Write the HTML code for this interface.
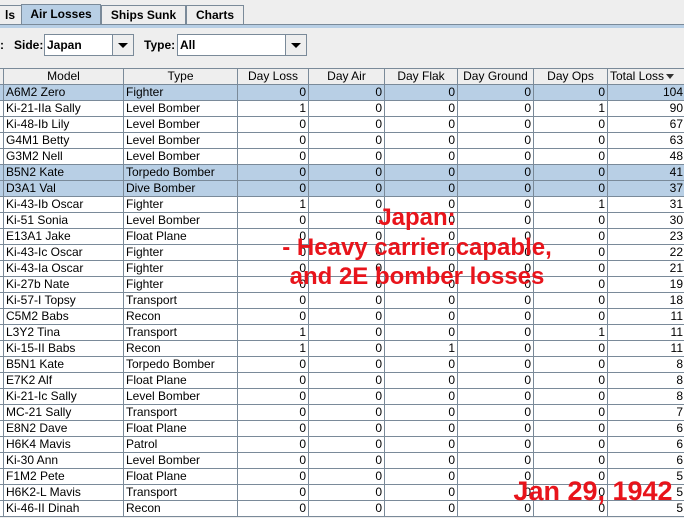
<!DOCTYPE html>
<html><head><style>
body{margin:0;width:684px;height:518px;overflow:hidden;background:#eeeeee;font-family:"Liberation Sans",Arial,sans-serif;font-size:12px;position:relative}
.tab{position:absolute;top:5px;height:19px;border:1px solid #7a8a99;border-bottom:none;background:#eeeeee;font-weight:bold;font-size:12px;line-height:19px;text-align:center;box-sizing:border-box}
.tab.sel{background:#b8cfe5;top:4px;height:21px}
.line{position:absolute;top:24px;left:0;width:684px;height:3px;background:#b8cfe5;border-top:1px solid #7a8a99}
.lbl{position:absolute;top:38px;font-weight:bold}
.combo{position:absolute;top:34px;height:22px;border:1px solid #7a8a99;background:#fff;box-sizing:border-box;font-weight:bold;line-height:20px;padding-left:2px}
.combo .btn{position:absolute;right:0;top:0;width:20px;height:20px;border-left:1px solid #7a8a99;background:#eee}
.combo .btn:after{content:"";position:absolute;left:5px;top:8px;border-left:5px solid transparent;border-right:5px solid transparent;border-top:5px solid #000}
table{position:absolute;left:-1px;top:68px;border-collapse:collapse;table-layout:fixed;width:686px}
td,th{border:1px solid #7a8a99;height:15px;padding:0 2px;white-space:nowrap;overflow:hidden;font-weight:normal;line-height:15px}
th{background:#eeeeee;text-align:center}
td{background:#fff}
td.n{text-align:right}
tr.s td{background:#b8cfe5}
.tri{display:inline-block;width:0;height:0;border-left:4px solid transparent;border-right:4px solid transparent;border-top:5px solid #333;vertical-align:middle;margin-left:2px}
.red{position:absolute;color:#e8141b;font-weight:bold;font-size:24px;text-align:center;line-height:29.5px;white-space:nowrap}
</style></head><body>
<div class="tab" style="left:-2px;width:24px">ls</div>
<div class="tab sel" style="left:21px;width:80px">Air Losses</div>
<div class="tab" style="left:101px;width:85px">Ships Sunk</div>
<div class="tab" style="left:186px;width:58px">Charts</div>
<div class="line"></div>
<div class="lbl" style="left:0">:</div>
<div class="lbl" style="left:14px">Side:</div>
<div class="combo" style="left:44px;width:90px">Japan<div class="btn"></div></div>
<div class="lbl" style="left:144px">Type:</div>
<div class="combo" style="left:177px;width:130px">All<div class="btn"></div></div>
<table>
<colgroup><col style="width:4px"><col style="width:120px"><col style="width:114px"><col style="width:71px"><col style="width:76px"><col style="width:73px"><col style="width:76px"><col style="width:74px"><col style="width:78px"></colgroup>
<tr><th></th><th>Model</th><th>Type</th><th>Day Loss</th><th>Day Air</th><th>Day Flak</th><th>Day Ground</th><th>Day Ops</th><th style="text-align:left">Total Loss<span class="tri"></span></th></tr>
<tr class="s"><td></td><td>A6M2 Zero</td><td>Fighter</td><td class="n">0</td><td class="n">0</td><td class="n">0</td><td class="n">0</td><td class="n">0</td><td class="n">104</td></tr>
<tr><td></td><td>Ki-21-IIa Sally</td><td>Level Bomber</td><td class="n">1</td><td class="n">0</td><td class="n">0</td><td class="n">0</td><td class="n">1</td><td class="n">90</td></tr>
<tr><td></td><td>Ki-48-Ib Lily</td><td>Level Bomber</td><td class="n">0</td><td class="n">0</td><td class="n">0</td><td class="n">0</td><td class="n">0</td><td class="n">67</td></tr>
<tr><td></td><td>G4M1 Betty</td><td>Level Bomber</td><td class="n">0</td><td class="n">0</td><td class="n">0</td><td class="n">0</td><td class="n">0</td><td class="n">63</td></tr>
<tr><td></td><td>G3M2 Nell</td><td>Level Bomber</td><td class="n">0</td><td class="n">0</td><td class="n">0</td><td class="n">0</td><td class="n">0</td><td class="n">48</td></tr>
<tr class="s"><td></td><td>B5N2 Kate</td><td>Torpedo Bomber</td><td class="n">0</td><td class="n">0</td><td class="n">0</td><td class="n">0</td><td class="n">0</td><td class="n">41</td></tr>
<tr class="s"><td></td><td>D3A1 Val</td><td>Dive Bomber</td><td class="n">0</td><td class="n">0</td><td class="n">0</td><td class="n">0</td><td class="n">0</td><td class="n">37</td></tr>
<tr><td></td><td>Ki-43-Ib Oscar</td><td>Fighter</td><td class="n">1</td><td class="n">0</td><td class="n">0</td><td class="n">0</td><td class="n">1</td><td class="n">31</td></tr>
<tr><td></td><td>Ki-51 Sonia</td><td>Level Bomber</td><td class="n">0</td><td class="n">0</td><td class="n">0</td><td class="n">0</td><td class="n">0</td><td class="n">30</td></tr>
<tr><td></td><td>E13A1 Jake</td><td>Float Plane</td><td class="n">0</td><td class="n">0</td><td class="n">0</td><td class="n">0</td><td class="n">0</td><td class="n">23</td></tr>
<tr><td></td><td>Ki-43-Ic Oscar</td><td>Fighter</td><td class="n">0</td><td class="n">0</td><td class="n">0</td><td class="n">0</td><td class="n">0</td><td class="n">22</td></tr>
<tr><td></td><td>Ki-43-Ia Oscar</td><td>Fighter</td><td class="n">0</td><td class="n">0</td><td class="n">0</td><td class="n">0</td><td class="n">0</td><td class="n">21</td></tr>
<tr><td></td><td>Ki-27b Nate</td><td>Fighter</td><td class="n">0</td><td class="n">0</td><td class="n">0</td><td class="n">0</td><td class="n">0</td><td class="n">19</td></tr>
<tr><td></td><td>Ki-57-I Topsy</td><td>Transport</td><td class="n">0</td><td class="n">0</td><td class="n">0</td><td class="n">0</td><td class="n">0</td><td class="n">18</td></tr>
<tr><td></td><td>C5M2 Babs</td><td>Recon</td><td class="n">0</td><td class="n">0</td><td class="n">0</td><td class="n">0</td><td class="n">0</td><td class="n">11</td></tr>
<tr><td></td><td>L3Y2 Tina</td><td>Transport</td><td class="n">1</td><td class="n">0</td><td class="n">0</td><td class="n">0</td><td class="n">1</td><td class="n">11</td></tr>
<tr><td></td><td>Ki-15-II Babs</td><td>Recon</td><td class="n">1</td><td class="n">0</td><td class="n">1</td><td class="n">0</td><td class="n">0</td><td class="n">11</td></tr>
<tr><td></td><td>B5N1 Kate</td><td>Torpedo Bomber</td><td class="n">0</td><td class="n">0</td><td class="n">0</td><td class="n">0</td><td class="n">0</td><td class="n">8</td></tr>
<tr><td></td><td>E7K2 Alf</td><td>Float Plane</td><td class="n">0</td><td class="n">0</td><td class="n">0</td><td class="n">0</td><td class="n">0</td><td class="n">8</td></tr>
<tr><td></td><td>Ki-21-Ic Sally</td><td>Level Bomber</td><td class="n">0</td><td class="n">0</td><td class="n">0</td><td class="n">0</td><td class="n">0</td><td class="n">8</td></tr>
<tr><td></td><td>MC-21 Sally</td><td>Transport</td><td class="n">0</td><td class="n">0</td><td class="n">0</td><td class="n">0</td><td class="n">0</td><td class="n">7</td></tr>
<tr><td></td><td>E8N2 Dave</td><td>Float Plane</td><td class="n">0</td><td class="n">0</td><td class="n">0</td><td class="n">0</td><td class="n">0</td><td class="n">6</td></tr>
<tr><td></td><td>H6K4 Mavis</td><td>Patrol</td><td class="n">0</td><td class="n">0</td><td class="n">0</td><td class="n">0</td><td class="n">0</td><td class="n">6</td></tr>
<tr><td></td><td>Ki-30 Ann</td><td>Level Bomber</td><td class="n">0</td><td class="n">0</td><td class="n">0</td><td class="n">0</td><td class="n">0</td><td class="n">6</td></tr>
<tr><td></td><td>F1M2 Pete</td><td>Float Plane</td><td class="n">0</td><td class="n">0</td><td class="n">0</td><td class="n">0</td><td class="n">0</td><td class="n">5</td></tr>
<tr><td></td><td>H6K2-L Mavis</td><td>Transport</td><td class="n">0</td><td class="n">0</td><td class="n">0</td><td class="n">0</td><td class="n">0</td><td class="n">5</td></tr>
<tr><td></td><td>Ki-46-II Dinah</td><td>Recon</td><td class="n">0</td><td class="n">0</td><td class="n">0</td><td class="n">0</td><td class="n">0</td><td class="n">5</td></tr>
</table>
<div class="red" style="left:217px;width:400px;top:203px">Japan:<br>- Heavy carrier capable,<br>and 2E bomber losses</div>
<div class="red" style="left:493px;width:200px;top:477px;font-size:27px">Jan 29, 1942</div>
</body></html>
